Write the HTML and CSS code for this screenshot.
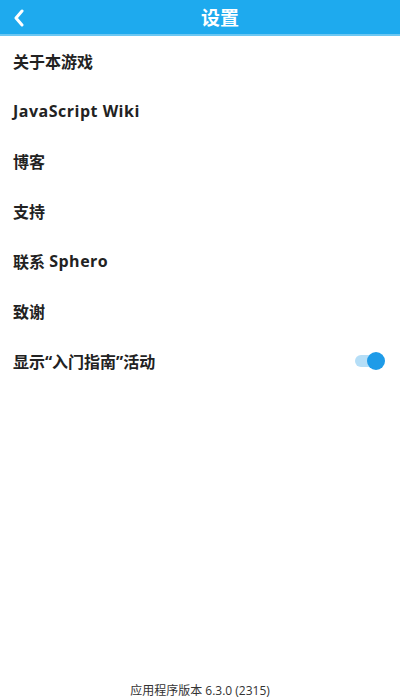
FILE: index.html
```html
<!DOCTYPE html>
<html lang="zh">
<head>
  <meta charset="UTF-8">
  <meta name="viewport" content="width=device-width, initial-scale=1.0">
  <title>设置</title>
  <link rel="stylesheet" href="styles.css">
</head>
<body>
  <div class="page">
    <div class="topbar">
      <span class="back">
        <svg width="14" height="18" viewBox="0 0 14 18"><path d="M10 2 L4 9 L10 16" fill="none" stroke="#fff" stroke-width="3" stroke-linecap="round" stroke-linejoin="round"/></svg>
      </span>
      <h1>设置</h1>
    </div>
    <ul class="menu">
      <li>关于本游戏</li>
      <li><span class="latin">JavaScript Wiki</span></li>
      <li>博客</li>
      <li>支持</li>
      <li>联系&nbsp;<span class="latin">Sphero</span></li>
      <li>致谢</li>
      <li class="toggle-row">
        <span>显示“入门指南”活动</span>
        <span class="switch"><span class="knob"></span></span>
      </li>
    </ul>
    <p class="version">应用程序版本 6.3.0 (2315)</p>
  </div>
</body>
</html>
```

FILE: styles.css
```css
body {
  margin: 0;
  font-family: "Open Sans", "Noto Sans CJK SC", sans-serif;
  background-color: #fff;
  color: #222;
}
.page {
  height: 700px;
  display: flex;
  flex-direction: column;
}
.topbar {
  height: 34px;
  background-color: #1eaaee;
  border-bottom: 2px solid #6cc7f2;
  display: flex;
  align-items: center;
  justify-content: center;
  padding-left: 40px;
  position: relative;
}
.back {
  position: absolute;
  left: 12px;
  top: 9px;
}
.topbar h1 {
  margin: 0;
  color: #fff;
  font-size: 19px;
  font-weight: bold;
}
.menu {
  list-style: none;
  margin: 0;
  padding: 0;
  flex: 1;
}
.menu li {
  height: 50px;
  display: flex;
  align-items: center;
  padding: 0 19px 0 13px;
  font-size: 16px;
  font-weight: bold;
}
.latin {
  letter-spacing: 0.5px;
}
.toggle-row {
  justify-content: space-between;
}
.switch {
  width: 26px;
  height: 12px;
  border-radius: 6px;
  background-color: #b5def7;
  position: relative;
}
.knob {
  position: absolute;
  right: -4px;
  top: -3px;
  width: 18px;
  height: 18px;
  border-radius: 50%;
  background-color: #1e9be8;
}
.version {
  margin: 0 0 1px;
  text-align: center;
  font-size: 12px;
  color: #333;
}
```
